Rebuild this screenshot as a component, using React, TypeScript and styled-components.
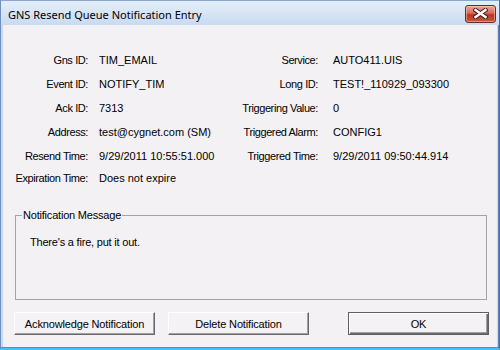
import styled, { createGlobalStyle } from 'styled-components'

const GlobalStyle = createGlobalStyle`
  html, body { margin: 0; padding: 0; background: #ffffff; }
  body { width: 500px; height: 350px; overflow: hidden; }
`

const FIELDS: [string, string, string, string][] = [
  ['Gns ID:', 'TIM_EMAIL', 'Service:', 'AUTO411.UIS'],
  ['Event ID:', 'NOTIFY_TIM', 'Long ID:', 'TEST!_110929_093300'],
  ['Ack ID:', '7313', 'Triggering Value:', '0'],
  ['Address:', 'test@cygnet.com (SM)', 'Triggered Alarm:', 'CONFIG1'],
  ['Resend Time:', '9/29/2011 10:55:51.000', 'Triggered Time:', '9/29/2011 09:50:44.914'],
  ['Expiration Time:', 'Does not expire', '', ''],
]

export default function App() {
  return (
    <>
      <GlobalStyle />
      <Window>
        <TitleBar>
          <Title>GNS Resend Queue Notification Entry</Title>
          <CloseBtn aria-label="Close">
            <svg width="15" height="11" viewBox="0 0 15 11">
              <path d="M2.5 2 L12.5 9 M12.5 2 L2.5 9" stroke="#4a1a14" strokeWidth="4.4" strokeLinecap="square" />
              <path d="M2.5 2 L12.5 9 M12.5 2 L2.5 9" stroke="#ffffff" strokeWidth="2.4" strokeLinecap="square" />
            </svg>
          </CloseBtn>
        </TitleBar>
        <Client>
          <Fields>
            {FIELDS.map(([l1, v1, l2, v2]) => (
              <Row key={l1}>
                <Label>{l1}</Label>
                <Value>{v1}</Value>
                <Label>{l2}</Label>
                <Value $wide>{v2}</Value>
              </Row>
            ))}
          </Fields>
          <Group>
            <Legend>Notification Message</Legend>
            <Message>There's a fire, put it out.</Message>
          </Group>
          <Buttons>
            <Button>Acknowledge Notification</Button>
            <Button>Delete Notification</Button>
            <Button $default>OK</Button>
          </Buttons>
        </Client>
      </Window>
    </>
  )
}

const Window = styled.div`
  width: 500px;
  height: 350px;
  box-sizing: border-box;
  display: flex;
  flex-direction: column;
  background: #c6d9f0;
  border-left: 1px solid #6e8fc0;
  border-right: 1px solid #3e6fb0;
  border-bottom: 2px solid #45c3ef;
  border-top: 1px solid #8aa6cc;
  box-shadow: inset -1px -1px #5e86c4;
`

const TitleBar = styled.div`
  height: 24px;
  flex-shrink: 0;
  display: flex;
  align-items: center;
  justify-content: space-between;
  padding: 0 3px 0 7px;
  background: linear-gradient(#e4eef9, #c9dbf1);
`

const Title = styled.div`
  font-family: 'Noto Sans', 'Open Sans', sans-serif;
  font-size: 11px;
  color: #000;
  margin-top: 3px;
`

const CloseBtn = styled.div`
  width: 31px;
  height: 18px;
  box-sizing: border-box;
  margin-top: 1px;
  display: flex;
  align-items: center;
  justify-content: center;
  border: 1px solid #6d2a22;
  border-radius: 3px;
  background: linear-gradient(#e8aa9f 0%, #d46a5b 45%, #bb3520 55%, #c8573f 100%);
  box-shadow: inset 0 0 0 1px rgba(255, 210, 200, 0.5);
`

const Client = styled.div`
  flex: 1;
  margin: 0 2px 1px 2px;
  background: #f3f1f4;
  display: flex;
  flex-direction: column;
  font-family: 'Liberation Sans', Arial, sans-serif;
  font-size: 11px;
  color: #000;
`

const Fields = styled.div`
  display: grid;
  grid-template-rows: repeat(5, 24px) 20px;
  margin-top: 23px;
`

const Row = styled.div`
  display: grid;
  grid-template-columns: 85px 130px 100px 1fr;
  align-items: center;
`

const Label = styled.div`
  text-align: right;
  white-space: nowrap;
  letter-spacing: -0.4px;
`

const Value = styled.div<{ $wide?: boolean }>`
  padding-left: ${p => (p.$wide ? '15px' : '11px')};
  white-space: nowrap;
`

const Group = styled.fieldset`
  margin: 21px 0 0 12px;
  width: 472px;
  height: 91px;
  box-sizing: border-box;
  padding: 0;
  border: 1px solid #a4a4a4;
  border-radius: 0;
  min-inline-size: 0;
`

const Legend = styled.legend`
  padding: 0 1px;
  margin-left: 6px;
  line-height: 13px;
  letter-spacing: -0.2px;
`

const Message = styled.div`
  margin: 14px 0 0 14px;
  letter-spacing: -0.2px;
`

const Buttons = styled.div`
  display: flex;
  gap: 13px;
  margin: 12px 0 0 11px;
  padding-right: 8px;
`

const Button = styled.button<{ $default?: boolean }>`
  width: 141px;
  height: 23px;
  box-sizing: border-box;
  padding: 0;
  font-family: 'Liberation Sans', Arial, sans-serif;
  font-size: 11px;
  letter-spacing: -0.15px;
  color: #000;
  background: #f4f2f4;
  border: 1px solid;
  border-color: #ffffff #696969 #696969 #ffffff;
  box-shadow: inset -1px -1px #a0a0a0;
  ${p =>
    p.$default &&
    `
    margin-left: auto;
    border: 1px solid #5f5f5f;
    box-shadow: inset 1px 1px #ffffff, inset -1px -1px #6a6a6a, inset -2px -2px #a0a0a0;
  `}
`
